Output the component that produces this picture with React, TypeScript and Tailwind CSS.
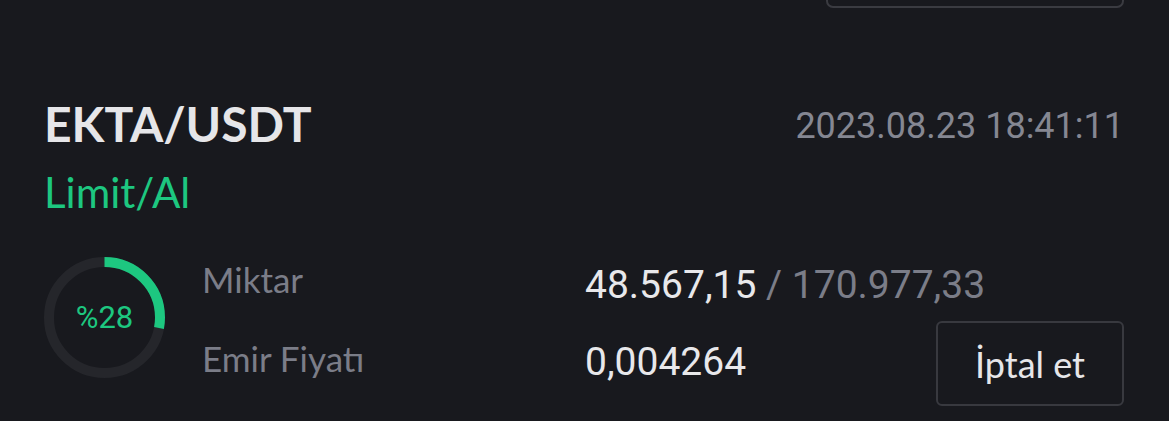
const lato = { fontFamily: '"Lato", "Noto Sans", sans-serif' };

function ProgressRing({ percent }: { percent: number }) {
  const r = 55.5;
  const c = 2 * Math.PI * r;
  return (
    <div className="relative w-[121px] h-[121px] shrink-0">
      <svg width="121" height="121" viewBox="0 0 121 121" className="-rotate-90">
        <circle cx="60.5" cy="60.5" r={r} fill="none" stroke="#25262b" strokeWidth="10" />
        <circle
          cx="60.5"
          cy="60.5"
          r={r}
          fill="none"
          stroke="#1dc780"
          strokeWidth="10"
          strokeDasharray={`${(c * percent) / 100} ${c}`}
        />
      </svg>
      <div className="absolute inset-0 flex items-center justify-center font-['Roboto',sans-serif] text-[31px] leading-none text-[#1dc780]">
        %{percent}
      </div>
    </div>
  );
}

export default function App() {
  return (
    <div className="w-full h-[421px] overflow-hidden bg-[#18191e] pl-[44px] pr-[45px]">
      {/* bottom edge of the previous card's button */}
      <div className="flex justify-end">
        <div className="w-[298px] h-[60px] -mt-[52px] rounded-[7px] border-2 border-[#3a3b41]" />
      </div>

      <div className="mt-[87px] flex items-start justify-between">
        <h2 style={lato} className="text-[48px] leading-[58px] font-bold text-[#e6e6e9]">
          EKTA/USDT
        </h2>
        <span className="mt-[10px] font-['Roboto',sans-serif] text-[36px] leading-[42px] text-[#858792]">
          2023.08.23 18:41:11
        </span>
      </div>
      <div style={lato} className="mt-[15px] text-[42px] leading-[48px] text-[#1dc780]">
        Limit/Al
      </div>

      <div className="mt-[41px] flex items-start">
        <ProgressRing percent={28} />

        <div style={lato} className="ml-[37px] w-[383px] pt-[1px] flex flex-col gap-[37px] text-[35px] leading-[42px] text-[#7b7d88]">
          <span>Miktar</span>
          <span>Emir Fiyatı</span>
        </div>

        <div className="flex-1 pt-[7px] flex flex-col font-['Roboto',sans-serif] text-[39px] leading-[42px] text-[#e8e8eb] whitespace-nowrap">
          <span>
            48.567,15 <span className="text-[#7b7d88]">/ 170.977,33</span>
          </span>
          <div className="mt-[15px] flex items-start justify-between">
            <span className="mt-[20px]">0,004264</span>
            <button
              style={lato}
              className="w-[188px] h-[85px] rounded-[6px] border-2 border-[#38393f] text-[36px] text-[#e6e6e9] flex items-center justify-center"
            >
              İptal et
            </button>
          </div>
        </div>
      </div>
    </div>
  );
}
